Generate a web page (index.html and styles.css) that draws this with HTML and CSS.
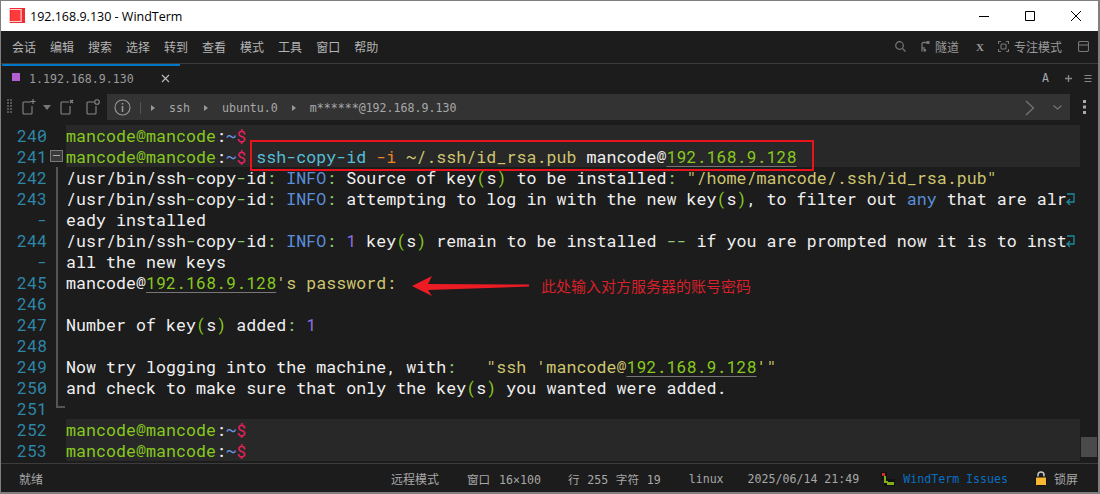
FILE: index.html
```html
<!DOCTYPE html>
<html lang="zh-CN">
<head>
<meta charset="utf-8">
<title>192.168.9.130 - WindTerm</title>
<link rel="stylesheet" href="styles.css">
</head>
<body>
<div class="window">
  <header class="titlebar">
    <svg class="app-logo" width="16" height="16" viewBox="0 0 16 16"><path fill="#ef2b33" d="M1 0h15v15H1z"/><path fill="#ffc4c4" d="M0 0h1v15H0z"/><path fill="#ff3a3a" d="M2 2h9.500v11H2z"/><path fill="#ffd0d0" d="M1 1h11v1H1zM1 13h11v1H1zM11.500 1h1.200v13h-1.200z"/></svg>
    <span class="title-text">192.168.9.130 - WindTerm</span>
    <div class="win-controls">
      <svg width="14" height="14" viewBox="0 0 14 14"><path d="M2 7.500h10" stroke="#000" stroke-width="1"/></svg>
      <svg width="14" height="14" viewBox="0 0 14 14"><path d="M2.500 2.500h9v9h-9z" fill="none" stroke="#000"/></svg>
      <svg width="14" height="14" viewBox="0 0 14 14"><path d="M2 2l10 10M12 2L2 12" stroke="#000"/></svg>
    </div>
  </header>

  <nav class="menubar">
    <span>会话</span><span>编辑</span><span>搜索</span><span>选择</span><span>转到</span><span>查看</span><span>模式</span><span>工具</span><span>窗口</span><span>帮助</span>
    <div class="menu-right">
      <svg class="m-search" width="11" height="11" viewBox="0 0 11 11" fill="none" stroke="#777" stroke-width="1.200"><circle cx="4.500" cy="4.500" r="3.800"/><path d="M7.500 7.500l3 3"/></svg>
      <span class="tool"><svg width="9" height="11" viewBox="0 0 9 11" fill="none" stroke="#777" stroke-width="1.300"><path d="M1 10.500V3Q1 1.500 2.500 1.500H6"/><path d="M1 7h3"/><rect x="5.500" y="0" width="3" height="3" fill="#777" stroke="none"/><rect x="2.500" y="8" width="2.500" height="2.500" fill="#777" stroke="none"/></svg>隧道</span>
      <span class="x-mark">X</span>
      <span class="tool"><svg width="11" height="11" viewBox="0 0 11 11" fill="none" stroke="#777" stroke-width="1.100"><path d="M.5 3V.5H3M8 .5h2.500V3M10.500 8v2.500H8M3 10.500H.5V8"/><rect x="3" y="3" width="5" height="5" rx="1"/></svg>专注模式</span>
      <svg width="11" height="11" viewBox="0 0 11 11" fill="none" stroke="#777" stroke-width="1.100"><rect x=".5" y=".5" width="10" height="10" rx="1.500"/><path d="M.5 4h10"/></svg>
    </div>
  </nav>

  <div class="tabbar">
    <div class="tab">
      <i class="tab-dot"></i>
      <span class="tab-label">1.192.168.9.130</span>
      <svg width="9" height="9" viewBox="0 0 9 9"><path d="M1 1l7 7M8 1L1 8" stroke="#bbb" stroke-width="1.100"/></svg>
    </div>
    <div class="tab-right">
      <span class="tab-a">A</span>
      <svg width="9" height="9" viewBox="0 0 9 9"><path d="M4.500 1v7M1 4.500h7" stroke="#888" stroke-width="1.300"/></svg>
      <svg width="8" height="9" viewBox="0 0 8 9"><path d="M.5 1.500h7M.5 4.500h7M.5 7.500h7" stroke="#888" stroke-width="1"/></svg>
    </div>
  </div>

  <div class="toolbar">
    <svg class="grip" width="6" height="16" viewBox="0 0 6 16" fill="#555"><path d="M0 0h2v2H0zM3 0h2v2H3zM0 3h2v2H0zM3 3h2v2H3zM0 6h2v2H0zM3 6h2v2H3zM0 9h2v2H0zM3 9h2v2H3zM0 12h2v2H0zM3 12h2v2H3z"/></svg>
    <svg class="t-new" width="14" height="16" viewBox="0 0 14 16" fill="none" stroke="#888" stroke-width="1.100"><path d="M9 3H2a1 1 0 0 0-1 1v10a1 1 0 0 0 1 1h7a1 1 0 0 0 1-1V7"/><path d="M11 0v5M8.500 2.500h5"/></svg>
    <svg class="t-caret" width="8" height="5" viewBox="0 0 8 5"><path d="M0 0h8L4 5z" fill="#777"/></svg>
    <svg class="t-close" width="14" height="16" viewBox="0 0 14 16" fill="none" stroke="#888" stroke-width="1.100"><path d="M9 3H2a1 1 0 0 0-1 1v10a1 1 0 0 0 1 1h7a1 1 0 0 0 1-1V7"/><path d="M10 1l3 3M13 1l-3 3"/></svg>
    <svg class="t-dup" width="14" height="16" viewBox="0 0 14 16" fill="none" stroke="#888" stroke-width="1.100"><path d="M8 3H2a1 1 0 0 0-1 1v10a1 1 0 0 0 1 1h7a1 1 0 0 0 1-1V7"/><circle cx="11" cy="3" r="2.300"/></svg>
    <div class="crumbs">
      <svg class="info" width="17" height="17" viewBox="0 0 17 17" fill="none" stroke="#999" stroke-width="1.100"><circle cx="8.500" cy="8.500" r="7.500"/><path d="M8.500 7v6M8.500 4v1.500" stroke-width="1.500"/></svg>
      <i class="crumb-sep"></i>
      <i class="crumb-arrow"></i><span class="c-ssh">ssh</span>
      <i class="crumb-arrow"></i><span class="c-ubu">ubuntu.0</span>
      <i class="crumb-arrow"></i><span>m******@192.168.9.130</span>
      <div class="crumb-end">
        <svg width="10" height="16" viewBox="0 0 10 16" fill="none" stroke="#777" stroke-width="1.200"><path d="M1 1l7.500 7L1 15"/></svg>
        <svg width="9" height="5" viewBox="0 0 9 5" fill="none" stroke="#777" stroke-width="1.100"><path d="M.5.500l4 3.500 4-3.500"/></svg>
      </div>
    </div>
    <svg class="t-more" width="3" height="14" viewBox="0 0 3 14" fill="#aaa"><path d="M0 0h3v3H0zM0 5.500h3v3H0zM0 11h3v3H0z"/></svg>
  </div>

  <main class="terminal">
    <div class="rows">
      <div class="row cur"><span class="ln">240</span><span class="fold"></span><span class="tx"><span class="g">mancode@mancode</span><span class="w">:</span><span class="b">~</span><span class="p">$</span></span></div>
      <div class="row cur"><span class="ln">241</span><span class="fold"><i class="fold-box"></i></span><span class="tx"><span class="g">mancode@mancode</span><span class="w">:</span><span class="b">~</span><span class="p">$</span> <span class="c">ssh-copy-id</span> <span class="o">-i</span> <span class="y">~/.ssh/id_rsa.pub</span> mancode@<span class="ip">192.168.9.128</span></span></div>
      <div class="row"><span class="ln">242</span><span class="fold v"></span><span class="tx">/usr/bin/ssh<span class="d">-</span>copy<span class="d">-</span>id<span class="d">:</span> <span class="i">INFO</span><span class="d">:</span> Source of key<span class="g">(</span>s<span class="g">)</span> to be installed<span class="d">:</span> <span class="y">"/home/mancode/.ssh/id_rsa.pub"</span></span></div>
      <div class="row"><span class="ln">243</span><span class="fold v"></span><span class="tx">/usr/bin/ssh<span class="d">-</span>copy<span class="d">-</span>id<span class="d">:</span> <span class="i">INFO</span><span class="d">:</span> attempting to log in with the new key<span class="g">(</span>s<span class="g">)</span>, to filter out <span class="i">any</span> that are alr<svg class="wrap" width="10" height="15" viewBox="0 0 10 15" fill="none" stroke="#1d8a9c" stroke-width="1.300"><path d="M1 2h7v8H1M4 7l-3 3 3 3"/></svg></span></div>
      <div class="row"><span class="ln cont">-</span><span class="fold v"></span><span class="tx">eady installed</span></div>
      <div class="row"><span class="ln">244</span><span class="fold v"></span><span class="tx">/usr/bin/ssh<span class="d">-</span>copy<span class="d">-</span>id<span class="d">:</span> <span class="i">INFO</span><span class="d">:</span> <span class="n">1</span> key<span class="g">(</span>s<span class="g">)</span> remain to be installed <span class="d">--</span> if you are prompted now it is to inst<svg class="wrap" width="10" height="15" viewBox="0 0 10 15" fill="none" stroke="#1d8a9c" stroke-width="1.300"><path d="M1 2h7v8H1M4 7l-3 3 3 3"/></svg></span></div>
      <div class="row"><span class="ln cont">-</span><span class="fold v"></span><span class="tx">all the new keys</span></div>
      <div class="row"><span class="ln">245</span><span class="fold v"></span><span class="tx">mancode@<span class="ip">192.168.9.128</span><span class="y">'s password:</span></span></div>
      <div class="row"><span class="ln">246</span><span class="fold v"></span><span class="tx"></span></div>
      <div class="row"><span class="ln">247</span><span class="fold v"></span><span class="tx">Number of key<span class="g">(</span>s<span class="g">)</span> added<span class="d">:</span> <span class="n">1</span></span></div>
      <div class="row"><span class="ln">248</span><span class="fold v"></span><span class="tx"></span></div>
      <div class="row"><span class="ln">249</span><span class="fold v"></span><span class="tx">Now try logging into the machine, with<span class="d">:</span>   <span class="y">"ssh 'mancode@</span><span class="ip">192.168.9.128</span><span class="y">'"</span></span></div>
      <div class="row"><span class="ln">250</span><span class="fold v"></span><span class="tx">and check to make sure that only the key<span class="g">(</span>s<span class="g">)</span> you wanted were added.</span></div>
      <div class="row"><span class="ln">251</span><span class="fold end"></span><span class="tx"></span></div>
      <div class="row cur"><span class="ln">252</span><span class="fold"></span><span class="tx"><span class="g">mancode@mancode</span><span class="w">:</span><span class="b">~</span><span class="p">$</span></span></div>
      <div class="row cur"><span class="ln">253</span><span class="fold"></span><span class="tx"><span class="g">mancode@mancode</span><span class="w">:</span><span class="b">~</span><span class="p">$</span></span></div>
    </div>
    <div class="scrollbar"><i class="thumb"></i></div>
    <div class="red-box"></div>
    <svg class="red-arrow" width="118" height="20" viewBox="0 0 118 20"><path fill="#ed1c24" d="M0 10L20 0l-4 8 101 .500v2L16 14l4 6z"/></svg>
    <span class="note">此处输入对方服务器的账号密码</span>
  </main>

  <footer class="statusbar">
    <span class="ready">就绪</span>
    <div class="status-right">
      <span class="s-mode">远程模式</span>
      <span class="s-win">窗口 16×100</span>
      <span class="s-pos">行 255 字符 19</span>
      <span class="s-os">linux</span>
      <span class="s-date">2025/06/14 21:49</span>
      <svg class="bug" width="14" height="14" viewBox="0 0 14 14"><path fill="#111" d="M0 0h6v7h8v7H3V8H0z"/><path fill="#d9281e" d="M1 1h3v3H1z"/><path fill="#7fae1e" d="M3 4h2v5h2v1h6v3H6v-2H3z"/></svg>
      <span class="s-link">WindTerm Issues</span>
      <svg class="lock" width="12" height="15" viewBox="0 0 12 15"><path d="M3 7V4a3 3 0 0 1 6 0v3" fill="none" stroke="#c9c9c9" stroke-width="1.500"/><rect x="0.500" y="6" width="11" height="8.500" rx="1" fill="#f7b733" stroke="#111"/></svg>
      <span class="s-lock">锁屏</span>
    </div>
  </footer>
</div>
</body>
</html>
```

FILE: styles.css
```css
* { box-sizing: border-box; }
html, body { margin: 0; padding: 0; height: 100%; background: #1c1c1c; overflow: hidden; }
body { font-family: "Noto Sans CJK SC", "Noto Sans", sans-serif; }

.window {
  width: 1100px;
  height: 494px;
  display: flex;
  flex-direction: column;
  border: 1px solid #7f7f7f;
  border-bottom-width: 2px;
  border-right-width: 2px;
  background: #1c1c1c;
  position: relative;
}

.titlebar {
  height: 30px;
  flex: none;
  background: #fff;
  display: flex;
  align-items: center;
  padding-left: 8px;
}
.app-logo { flex: none; margin-right: 5px; }
.title-text { font: 12.500px "Open Sans", "Noto Sans", sans-serif; color: #000; }
.win-controls { margin-left: auto; display: flex; gap: 32px; padding-right: 15px; }

.menubar {
  height: 33px;
  flex: none;
  display: flex;
  align-items: center;
  gap: 14px;
  padding-left: 11px;
  padding-bottom: 1px;
  font-size: 12px;
  color: #b4b4b4;
  border-bottom: 1px solid #3c3c3c;
}
.menu-right {
  margin-left: auto;
  display: flex;
  align-items: center;
  padding-right: 9px;
  gap: 16px;
  color: #9a9a9a;
}
.m-search { margin-right: -1px; }
.tool { display: flex; align-items: center; gap: 5px; }
.x-mark { font: bold 11px "Liberation Serif", serif; color: #999; margin: 0 -2px 0 1px; }

.tabbar {
  height: 30px;
  flex: none;
  display: flex;
  align-items: center;
  justify-content: space-between;
  padding-right: 6px;
}
.tab {
  width: 178px;
  height: 30px;
  margin-left: 1px;
  display: flex;
  align-items: center;
  border-top: 2px solid #0078c8;
  padding-left: 10px;
  padding-bottom: 3px;
  font: 11.600px "DejaVu Sans Mono", monospace;
  color: #9a9a9a;
}
.tab-dot { width: 8px; height: 8px; background: #b45fd0; margin: 0 9px 4px 0; }
.tab-label { margin-right: 27px; }
.tab-right { display: flex; align-items: center; gap: 11px; padding-bottom: 2px; }
.tab-a { font: 11.600px "DejaVu Sans Mono", monospace; color: #a0a8b4; margin-right: 4px; }

.toolbar {
  height: 26px;
  flex: none;
  display: flex;
  align-items: center;
  padding-left: 6px;
}
.grip { margin-right: 9px; }
.t-caret { margin: 0 9px 0 7px; }
.t-close { margin-right: 12px; }
.t-dup { margin-right: 7px; }
.crumbs {
  width: 963px;
  height: 26px;
  background: #333;
  display: flex;
  align-items: center;
  padding-left: 7px;
  padding-top: 1px;
  font: 11.600px "DejaVu Sans Mono", monospace;
  color: #a8a8a8;
}
.crumb-sep { width: 1px; height: 12px; background: #555; margin: 0 10px 0 9px; }
.crumb-arrow {
  width: 0; height: 0;
  border-left: 4px solid #999;
  border-top: 3px solid transparent;
  border-bottom: 3px solid transparent;
  margin-right: 14px;
}
.crumbs span { margin-right: 14px; }
.crumb-end { margin-left: auto; display: flex; align-items: center; gap: 18px; padding-right: 8px; }
.t-more { margin-left: 13px; }

.terminal {
  flex: 1;
  min-height: 0;
  margin-top: 5px;
  display: flex;
  position: relative;
  font: 16.611px/23px "Roboto Mono", "DejaVu Sans Mono", monospace;
  letter-spacing: .04px;
  color: #f0f0f0;
}
.rows { width: 1079px; flex: none; }
.row { height: 21px; display: flex; white-space: pre; }
.ln { width: 46px; flex: none; text-align: right; color: #2e86a8; }
.cont { color: #2e86a8; }
.fold { width: 19px; flex: none; position: relative; }
.fold-box {
  position: absolute; left: 3px; top: 4px;
  width: 13px; height: 12px;
  border: 1px solid #777; background: #3a3a3a;
}
.fold-box::after { content: ""; position: absolute; left: 2px; top: 4px; width: 7px; height: 1px; background: #aaa; }
.fold.v::before { content: ""; position: absolute; left: 9px; top: 0; bottom: 0; width: 2px; background: #555; }
.fold.end::before { content: ""; position: absolute; left: 9px; top: 0; height: 8px; width: 7px; border-left: 2px solid #555; border-bottom: 2px solid #555; }
.tx { flex: 1; position: relative; }
.cur .tx { background: #282828; }
.wrap { position: absolute; left: 1000px; top: 4px; }

.g { color: #87c91e; }
.w { color: #f0f0f0; }
.b { color: #6e96e8; }
.p { color: #e8205f; }
.c { color: #55bfd8; }
.o { color: #e8862a; }
.y { color: #cfc670; }
.d { color: #8ecb74; }
.i { color: #5a8fdc; }
.n { color: #8a6de0; }
.ip { color: #87c91e; text-decoration: underline; text-decoration-color: #777; text-underline-offset: 3px; text-decoration-thickness: 1px; }

.scrollbar { width: 16px; flex: none; position: relative; margin-left: 1px; }
.thumb { position: absolute; left: 0; right: 0; top: 312px; height: 20px; background: #4a4a4a; }

.red-box { position: absolute; left: 249px; top: 15px; width: 564px; height: 31px; border: 2px solid #e8131c; pointer-events: none; }
.red-arrow { position: absolute; left: 411px; top: 151px; }
.note { position: absolute; left: 540px; top: 150px; font: 15px/21px "Noto Sans CJK SC", sans-serif; letter-spacing: 0; color: #d7202a; }

.statusbar {
  height: 29px;
  flex: none;
  display: flex;
  align-items: center;
  border-top: 1px solid #3c3c3c;
  padding-left: 18px;
  padding-top: 1px;
  font-size: 12px;
  color: #a8a8a8;
  background: #1c1c1c;
}
.status-right { margin-left: auto; display: flex; align-items: center; font: 11.600px "DejaVu Sans Mono", "Noto Sans CJK SC", monospace; padding-right: 20px; }
.s-mode { margin-right: 28px; font: 12px "Noto Sans CJK SC", sans-serif; }
.s-win { margin-right: 27px; word-spacing: 2px; }
.s-pos { margin-right: 28px; word-spacing: .7px; }
.s-os { margin-right: 24px; }
.s-date { margin-right: 22px; }
.bug { margin-right: 8px; }
.s-link { color: #0a6fc2; margin-right: 27px; }
.lock { margin-right: 7px; }
.s-lock { font: 12px "Noto Sans CJK SC", sans-serif; }
```
